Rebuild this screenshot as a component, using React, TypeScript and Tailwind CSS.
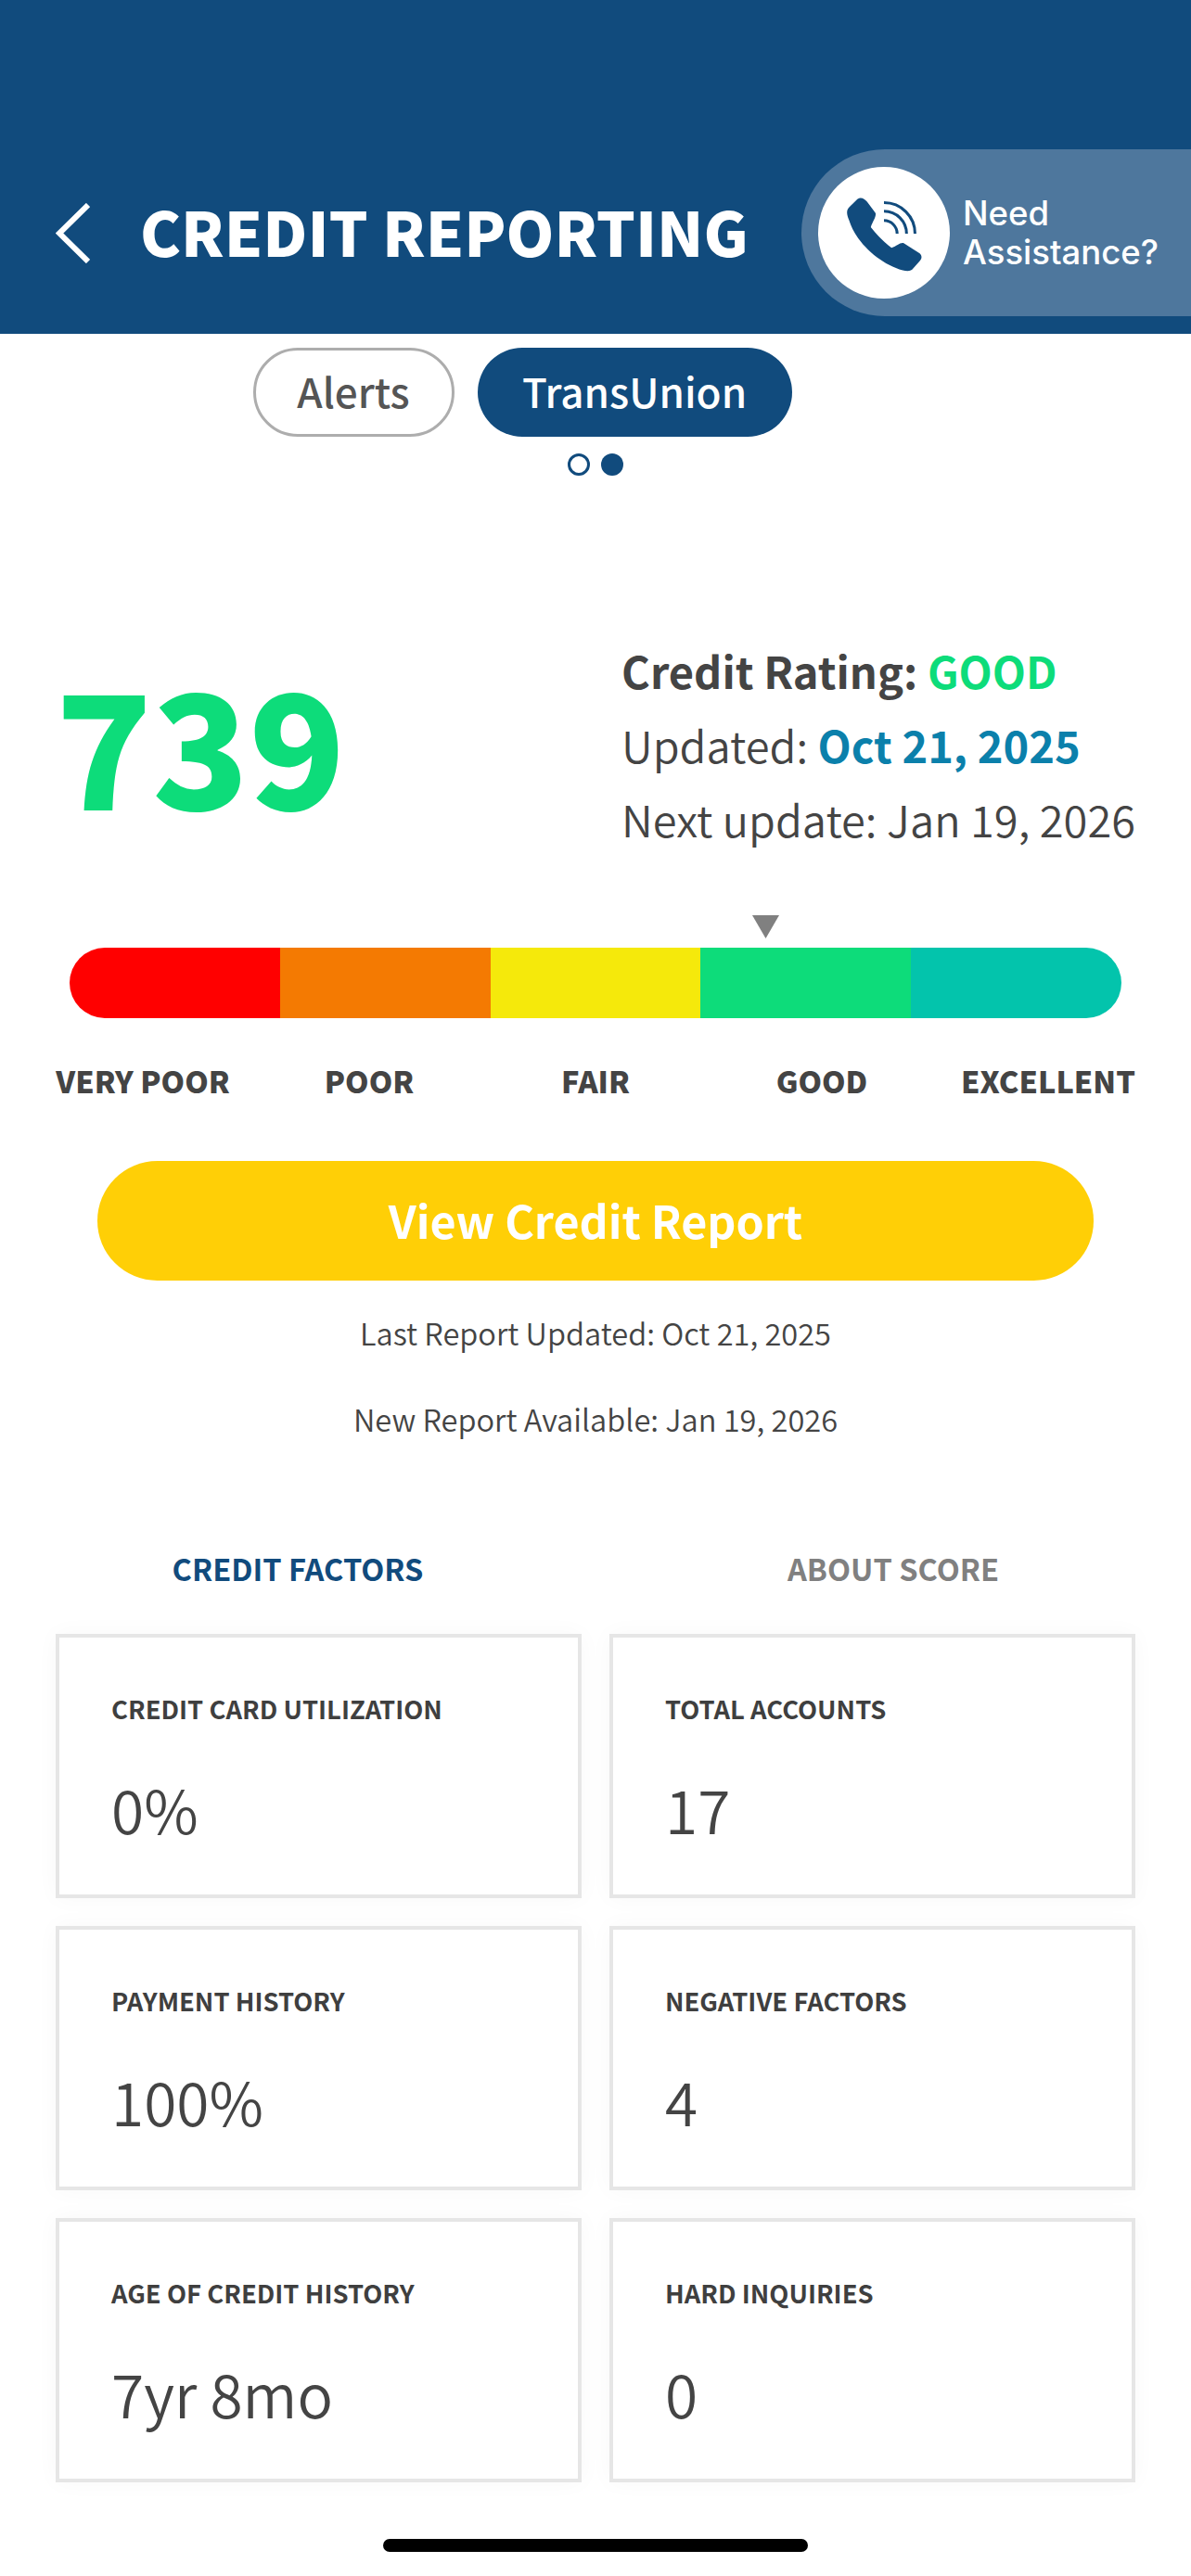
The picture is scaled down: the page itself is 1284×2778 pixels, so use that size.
const font = "font-['Noto_Sans_CJK_JP','Noto_Sans',sans-serif]";

const bands = ["bg-[#ff0000]", "bg-[#f47a02]", "bg-[#f5e90b]", "bg-[#0ddc7a]", "bg-[#03c4ac]"];
const bandLabels = ["VERY POOR", "POOR", "FAIR", "GOOD", "EXCELLENT"];
const factors = [
  ["CREDIT CARD UTILIZATION", "0%"],
  ["TOTAL ACCOUNTS", "17"],
  ["PAYMENT HISTORY", "100%"],
  ["NEGATIVE FACTORS", "4"],
  ["AGE OF CREDIT HISTORY", "7yr 8mo"],
  ["HARD INQUIRIES", "0"],
];

function PhoneIcon() {
  return (
    <svg viewBox="0 0 140 140" className="w-[142px] h-[142px]">
      <path
        d="M45 33C48 33 50 35 52 37L61 49C62 53 58 58 56 64C62 72 70 80 78 86C84 84 87 80 91 81L108 92C111 95 110 98 108 100L101 108C99 111 95 111 90 110C65 103 40 80 33 57C30 50 30 46 33 43L41 35C42 34 43 33 45 33Z"
        fill="#114b7d"
      />
      <g fill="none" stroke="#114b7d" strokeWidth="3">
        <path d="M70 38A33 33 0 0 1 103 71" />
        <path d="M70 47A24 24 0 0 1 94 71" />
        <path d="M70 57A14 14 0 0 1 84 71" />
      </g>
    </svg>
  );
}

function Header() {
  return (
    <header className="h-[360px] bg-[#114b7d] flex items-end pb-[19px] text-white">
      <div className="h-[180px] flex-1 flex items-center pl-[60px]">
        <svg viewBox="0 0 37 65" className="w-[37px] h-[65px] shrink-0">
          <path d="M35 2L4 32.5L35 63" fill="none" stroke="#fff" strokeWidth="6" />
        </svg>
        <h1 className="ml-[54px] mb-[6px] text-[66px] leading-none font-black whitespace-nowrap">
          CREDIT REPORTING
        </h1>
      </div>
      <div className="w-[420px] h-[180px] shrink-0 bg-[#4e779d] rounded-l-[90px] flex items-center pl-[18px]">
        <div className="w-[142px] h-[142px] rounded-full bg-white shrink-0">
          <PhoneIcon />
        </div>
        <div className="ml-[14px] font-['Inter',sans-serif] text-[36.5px] leading-[42px] font-medium">
          Need
          <br />
          Assistance?
        </div>
      </div>
    </header>
  );
}

function Tabs() {
  return (
    <div className="flex flex-col items-center pt-[15px]">
      <div className="flex gap-[25px] mr-[158px]">
        <div className="w-[217px] h-[96px] pb-[4px] rounded-full border-[3px] border-[#adadad] text-[#555] text-[44px] font-medium flex items-center justify-center">
          Alerts
        </div>
        <div className="w-[339px] h-[96px] pb-[4px] rounded-full bg-[#114b7d] text-white text-[44px] font-medium flex items-center justify-center">
          TransUnion
        </div>
      </div>
      <div className="flex gap-[12px] mt-[18px]">
        <span className="w-[24px] h-[24px] rounded-full border-[3px] border-[#114b7d]" />
        <span className="w-[24px] h-[24px] rounded-full bg-[#114b7d]" />
      </div>
    </div>
  );
}

function Score() {
  return (
    <section className="mt-[204px] pl-[60px] pr-[60px] flex justify-between h-[170px] items-center">
      <div className="mb-[5px] text-[#0ddc7a] text-[171px] leading-none font-black">739</div>
      <div className="mt-[2px] text-[#444] text-[47px] leading-[80px] font-[350] whitespace-nowrap">
        <div className="font-bold">
          Credit Rating: <span className="text-[#0ddc7a]">GOOD</span>
        </div>
        <div>
          Updated: <span className="font-bold text-[#0b80ab]">Oct 21, 2025</span>
        </div>
        <div>Next update: Jan 19, 2026</div>
      </div>
    </section>
  );
}

function Gauge() {
  return (
    <section className="mt-[100px]">
      <div className="h-[25px] pl-[811px]">
        <svg viewBox="0 0 29 25" className="w-[29px] h-[25px]">
          <path d="M0 0H29L14.5 25Z" fill="#808080" />
        </svg>
      </div>
      <div className="mt-[10px] mx-[75px] h-[76px] rounded-full overflow-hidden flex">
        {bands.map((b) => (
          <div key={b} className={`flex-1 ${b}`} />
        ))}
      </div>
      <div className="mt-[44px] mx-[32px] grid grid-cols-5">
        {bandLabels.map((l) => (
          <div key={l} className="text-center text-[#444] text-[32.5px] leading-[46px] font-black whitespace-nowrap">
            {l}
          </div>
        ))}
      </div>
    </section>
  );
}

function Report() {
  return (
    <section className="mt-[64px] flex flex-col items-center">
      <div className="w-[1074px] h-[129px] pb-[2px] rounded-full bg-[#ffcf06] text-white text-[48.4px] font-bold flex items-center justify-center">
        View Credit Report
      </div>
      <p className="mt-[33px] text-[#444] text-[32.6px] leading-[46px] font-[350]">Last Report Updated: Oct 21, 2025</p>
      <p className="mt-[47px] text-[#444] text-[32.6px] leading-[46px] font-[350]">New Report Available: Jan 19, 2026</p>
    </section>
  );
}

function Factors() {
  return (
    <section className="mt-[115px]">
      <div className="grid grid-cols-2 text-[32.6px] leading-[46px] font-bold text-center">
        <div className="text-[#114b7d]">CREDIT FACTORS</div>
        <div className="text-[#808080]">ABOUT SCORE</div>
      </div>
      <div className="mt-[48px] mx-[60px] grid grid-cols-2 gap-x-[30px] gap-y-[30px]">
        {factors.map(([label, value]) => (
          <div
            key={label}
            className="h-[285px] border-[4px] border-[#e6e6e6] bg-white pl-[56px] pt-[56px] shadow-[0_0_24px_rgba(0,0,0,0.03)]"
          >
            <div className="text-[#3f3f3f] text-[27.4px] leading-[40px] font-bold whitespace-nowrap">{label}</div>
            <div className="mt-[44px] text-[#444] text-[64px] leading-[88px] font-[350]">{value}</div>
          </div>
        ))}
      </div>
    </section>
  );
}

export default function App() {
  return (
    <div className={`relative w-[1284px] h-[2778px] bg-white overflow-hidden ${font}`}>
      <Header />
      <Tabs />
      <Score />
      <Gauge />
      <Report />
      <Factors />
      {/* home indicator */}
      <div className="absolute left-[413px] top-[2738px] w-[458px] h-[14px] rounded-full bg-black" />
    </div>
  );
}
